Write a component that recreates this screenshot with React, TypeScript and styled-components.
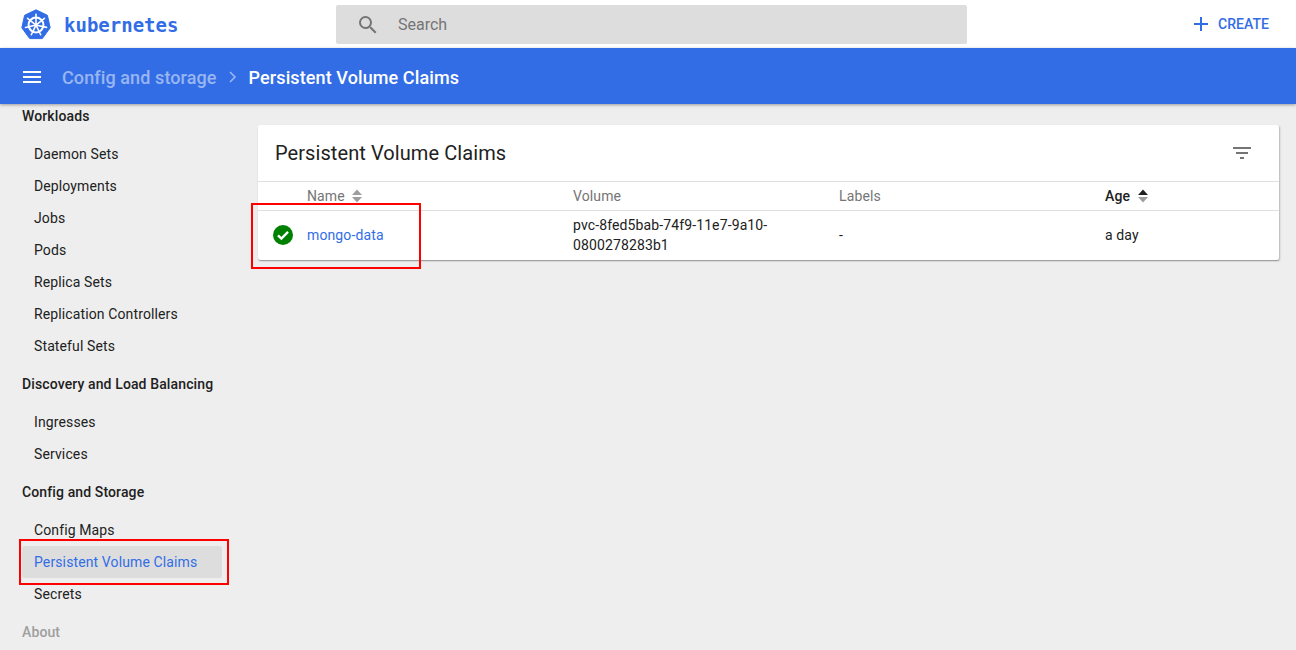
import React from "react";
import styled, { createGlobalStyle } from "styled-components";

const GlobalStyle = createGlobalStyle`
  html, body {
    margin: 0;
    padding: 0;
    height: 100%;
    overflow: hidden;
    background: #eeeeee;
    font-family: Roboto, "Liberation Sans", sans-serif;
  }
`;

const Page = styled.div`
  position: relative;
  width: 1296px;
  height: 650px;
  display: flex;
  flex-direction: column;
  overflow: hidden;
`;

const TopBar = styled.header`
  height: 48px;
  flex: none;
  display: flex;
  align-items: center;
  background: #fff;
`;

const Brand = styled.div`
  width: 336px;
  flex: none;
  display: flex;
  align-items: center;
  gap: 13px;
  padding-left: 21px;
  box-sizing: border-box;
`;

const BrandName = styled.span`
  padding-top: 1px;
  font-family: "DejaVu Sans Mono", monospace;
  font-weight: 700;
  font-size: 19px;
  color: #326de6;
`;

const SearchBox = styled.div`
  width: 631px;
  height: 39px;
  margin-top: 1px;
  flex: none;
  display: flex;
  align-items: center;
  gap: 18px;
  padding-left: 20px;
  box-sizing: border-box;
  border-radius: 2px;
  background: #dddddd;
  font-size: 16px;
  color: #757575;
`;

const CreateButton = styled.div`
  margin-left: auto;
  margin-right: 27px;
  display: flex;
  align-items: center;
  gap: 9px;
  font-size: 14px;
  font-weight: 500;
  letter-spacing: 0.05px;
  color: #326de6;
`;

const BlueBar = styled.div`
  position: relative;
  z-index: 2;
  height: 56px;
  flex: none;
  display: flex;
  align-items: center;
  padding: 2px 0 0 23px;
  box-sizing: border-box;
  background: #326de6;
  box-shadow: 0 1px 3px rgba(0, 0, 0, 0.35);
  font-size: 18px;
  font-weight: 500;
  letter-spacing: 0.1px;
  color: #fff;
`;

const Crumb = styled.span`
  margin-left: 21px;
  color: rgba(255, 255, 255, 0.5);
`;

const CrumbChevron = styled.svg`
  margin: 0 10px 0 10px;
`;

const Body = styled.div`
  flex: 1;
  min-height: 0;
  display: flex;
  letter-spacing: 0.12px;
`;

const Sidebar = styled.nav`
  width: 240px;
  flex: none;
  overflow: hidden;
`;

const SidebarInner = styled.div`
  margin-top: -10px;
  padding-left: 22px;
`;

const GroupTitle = styled.div<{ $muted?: boolean }>`
  height: 44px;
  line-height: 44px;
  font-size: 14px;
  font-weight: 500;
  color: ${(p) => (p.$muted ? "#9e9e9e" : "#212121")};
`;

const NavItem = styled.div<{ $active?: boolean }>`
  width: 200px;
  height: 32px;
  line-height: 32px;
  padding-left: 12px;
  box-sizing: border-box;
  font-size: 14px;
  border-radius: 2px;
  color: ${(p) => (p.$active ? "#326de6" : "#212121")};
  background: ${(p) => (p.$active ? "#dddddd" : "transparent")};
`;

const Main = styled.main`
  flex: 1;
  padding: 21px 17px 0 18px;
`;

const Card = styled.section`
  background: #fff;
  border-radius: 2px;
  box-shadow: 0 1px 1px rgba(0, 0, 0, 0.22), 1px 1px 2px rgba(0, 0, 0, 0.22);
`;

const CardHeader = styled.div`
  height: 56px;
  display: flex;
  align-items: center;
  justify-content: space-between;
  padding: 0 28px 0 17px;
  font-size: 20px;
  letter-spacing: 0.08px;
  color: #212121;
`;

const Row = styled.div`
  display: grid;
  grid-template-columns: 49px 266px 266px 266px 1fr;
  align-items: center;
  border-top: 1px solid #e0e0e0;
  font-size: 14px;
`;

const HeadRow = styled(Row)`
  height: 28px;
  color: #757575;
`;

const DataRow = styled(Row)`
  height: 50px;
  box-sizing: border-box;
  padding-bottom: 2px;
  color: #212121;
`;

const HeadCell = styled.div<{ $sorted?: boolean }>`
  display: flex;
  align-items: center;
  gap: ${(p) => (p.$sorted ? 8 : 7)}px;
  font-weight: ${(p) => (p.$sorted ? 500 : 400)};
  color: ${(p) => (p.$sorted ? "#212121" : "#757575")};
`;

const StatusCell = styled.div`
  display: flex;
  padding-left: 15px;
`;

const NameLink = styled.span`
  color: #326de6;
`;

const VolumeText = styled.div`
  width: 210px;
  line-height: 20px;
  word-break: break-word;
`;

const Annotation = styled.div<{ $x: number; $y: number; $w: number; $h: number }>`
  position: absolute;
  left: ${(p) => p.$x}px;
  top: ${(p) => p.$y}px;
  width: ${(p) => p.$w}px;
  height: ${(p) => p.$h}px;
  box-sizing: border-box;
  border: 2px solid #f00;
  z-index: 3;
`;

const KubeLogo = () => (
  <svg width="30" height="31" viewBox="0 0 30 31">
    <path
      d="M15 0.8 L26.4 6.3 L29.2 18.8 L21.3 29.6 L8.7 29.6 L0.8 18.8 L3.6 6.3 Z"
      fill="#326de6"
      stroke="#326de6"
      strokeLinejoin="round"
    />
    <g stroke="#fff" fill="none">
      <circle cx="15" cy="16" r="7.4" strokeWidth="2" />
      <circle cx="15" cy="16" r="2" fill="#fff" stroke="none" />
      {[0, 51.4, 102.8, 154.3, 205.7, 257.1, 308.6].map((a) => (
        <line key={a} x1="15" y1="14" x2="15" y2="5.2" strokeWidth="1.6" strokeLinecap="round" transform={`rotate(${a} 15 16)`} />
      ))}
    </g>
  </svg>
);

const SearchIcon = () => (
  <svg width="24" height="24" viewBox="0 0 24 24" fill="#757575">
    <path d="M15.5 14h-.79l-.28-.27A6.47 6.47 0 0 0 16 9.5 6.5 6.5 0 1 0 9.5 16c1.61 0 3.09-.59 4.23-1.57l.27.28v.79l5 4.99L20.49 19l-4.99-5zm-6 0C7.01 14 5 11.99 5 9.5S7.01 5 9.5 5 14 7.01 14 9.5 11.99 14 9.5 14z" />
  </svg>
);

const PlusIcon = () => (
  <svg width="16" height="16" viewBox="0 0 16 16" fill="#326de6">
    <path d="M7 1h2v6h6v2H9v6H7V9H1V7h6z" />
  </svg>
);

const MenuIcon = () => (
  <svg width="18" height="12" viewBox="0 0 18 12" fill="#fff">
    <path d="M0 0h18v2H0zM0 5h18v2H0zM0 10h18v2H0z" />
  </svg>
);

const FilterIcon = () => (
  <svg width="18" height="12" viewBox="0 0 18 12" fill="#757575">
    <path d="M0 0h18v2H0zM3 5h12v2H3zM7 10h4v2H7z" />
  </svg>
);

const SortIcon = ({ up = "#9e9e9e", down = "#9e9e9e" }: { up?: string; down?: string }) => (
  <svg width="10" height="14" viewBox="0 0 10 14">
    <path d="M5 0.5 L10 6 H0 Z" fill={up} />
    <path d="M5 13.5 L10 8 H0 Z" fill={down} />
  </svg>
);

const CheckIcon = () => (
  <svg width="20" height="20" viewBox="0 0 20 20">
    <circle cx="10" cy="10" r="10" fill="#008000" />
    <path d="M5 10.3 L8.4 13.6 L15 6.8" fill="none" stroke="#fff" strokeWidth="2.4" />
  </svg>
);

const navGroups = [
  {
    title: "Workloads",
    items: ["Daemon Sets", "Deployments", "Jobs", "Pods", "Replica Sets", "Replication Controllers", "Stateful Sets"],
  },
  { title: "Discovery and Load Balancing", items: ["Ingresses", "Services"] },
  { title: "Config and Storage", items: ["Config Maps", "Persistent Volume Claims", "Secrets"] },
];

const App: React.FC = () => {
  return (
    <Page>
      <GlobalStyle />
      <TopBar>
        <Brand>
          <KubeLogo />
          <BrandName>kubernetes</BrandName>
        </Brand>
        <SearchBox>
          <SearchIcon />
          Search
        </SearchBox>
        <CreateButton>
          <PlusIcon />
          CREATE
        </CreateButton>
      </TopBar>

      <BlueBar>
        <MenuIcon />
        <Crumb>Config and storage</Crumb>
        <CrumbChevron width="12" height="14" viewBox="0 0 12 14">
          <path d="M3 2 L8 7 L3 12" fill="none" stroke="rgba(255,255,255,0.5)" strokeWidth="1.6" />
        </CrumbChevron>
        Persistent Volume Claims
      </BlueBar>

      <Body>
        <Sidebar>
          <SidebarInner>
            {navGroups.map((group) => (
              <React.Fragment key={group.title}>
                <GroupTitle>{group.title}</GroupTitle>
                {group.items.map((item) => (
                  <NavItem key={item} $active={item === "Persistent Volume Claims"}>
                    {item}
                  </NavItem>
                ))}
              </React.Fragment>
            ))}
            <GroupTitle $muted>About</GroupTitle>
          </SidebarInner>
        </Sidebar>

        <Main>
          <Card>
            <CardHeader>
              Persistent Volume Claims
              <FilterIcon />
            </CardHeader>
            <HeadRow>
              <div />
              <HeadCell>
                Name <SortIcon />
              </HeadCell>
              <HeadCell>Volume</HeadCell>
              <HeadCell>Labels</HeadCell>
              <HeadCell $sorted>
                Age <SortIcon up="#212121" />
              </HeadCell>
            </HeadRow>
            <DataRow>
              <StatusCell>
                <CheckIcon />
              </StatusCell>
              <NameLink>mongo-data</NameLink>
              <VolumeText>pvc-8fed5bab-74f9-11e7-9a10-0800278283b1</VolumeText>
              <div>-</div>
              <div>a day</div>
            </DataRow>
          </Card>
        </Main>
      </Body>

      <Annotation $x={251} $y={203} $w={170} $h={66} />
      <Annotation $x={19} $y={539} $w={210} $h={46} />
    </Page>
  );
};

export default App;
